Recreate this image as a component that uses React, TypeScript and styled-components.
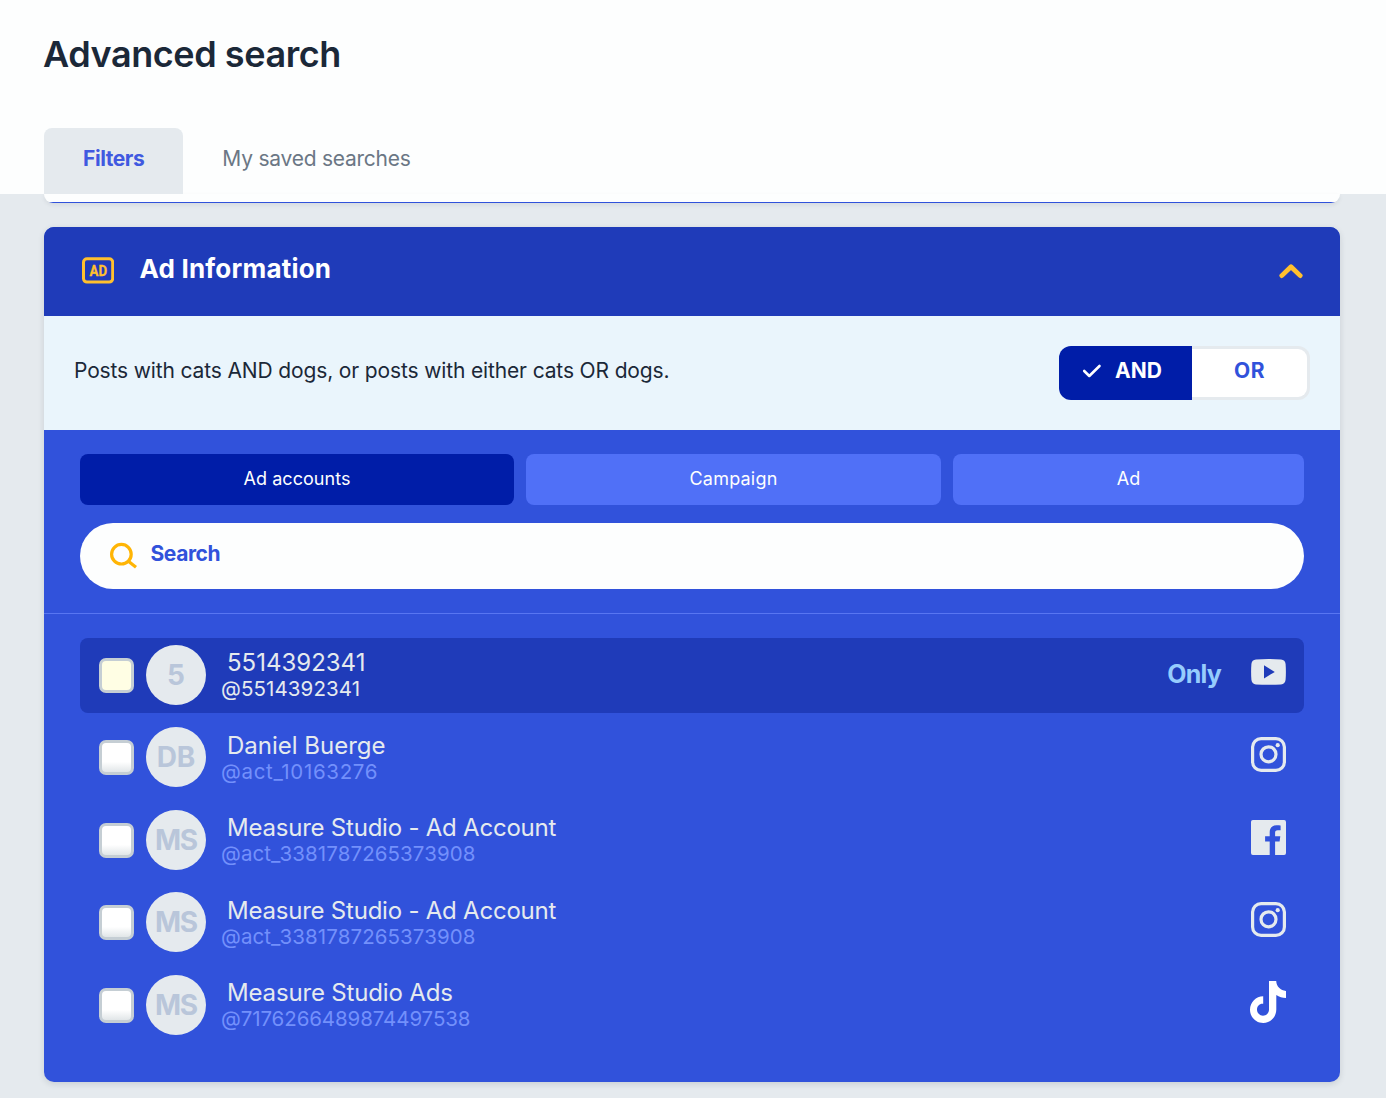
import React from "react";
import styled, { createGlobalStyle } from "styled-components";

const Global = createGlobalStyle`
  * { box-sizing: border-box; }
  html, body { margin: 0; padding: 0; }
  body {
    background: #e5eaee;
    font-family: Inter, "Liberation Sans", sans-serif;
    color: #1b2838;
    height: 1098px;
    overflow: hidden;
  }
  button { font-family: inherit; border: 0; padding: 0; margin: 0; cursor: pointer; }
`;

const Label = styled.span<{ $size: number; $weight?: number; $spacing?: number }>`
  display: block;
  font-size: ${(p) => p.$size}px;
  font-weight: ${(p) => p.$weight ?? 400};
  letter-spacing: ${(p) => p.$spacing ?? 0}px;
  line-height: 26px;
  white-space: nowrap;
`;

const TopBar = styled.header`
  height: 194px;
  padding: 0 44px;
  background: #fdfefe;
  display: flex;
  flex-direction: column;
  justify-content: space-between;
`;

const Title = styled.h1`
  margin: 0 0 0 -1px;
  padding-top: 30px;
  font-size: 36px;
  line-height: 48px;
  font-weight: 600;
  letter-spacing: -0.43px;
  white-space: nowrap;
`;

const PageTabs = styled.nav`
  display: flex;
`;

const PageTab = styled.button<{ $active?: boolean }>`
  height: 66px;
  padding: 0 39px 4px;
  border-radius: 8px 8px 0 0;
  background: ${(p) => (p.$active ? "#e5eaee" : "transparent")};
  color: ${(p) => (p.$active ? "#4059e0" : "#6b7785")};
`;

const Main = styled.main`
  padding: 0 46px 0 44px;
`;

const PreviousCard = styled.div`
  height: 9px;
  border-radius: 0 0 9px 9px;
  background: linear-gradient(#fdfefe 8px, #3152db 8px);
  box-shadow: 0 2px 4px rgba(27, 40, 56, 0.08);
`;

const Card = styled.section`
  margin-top: 24px;
  height: 855px;
  border-radius: 10px;
  overflow: hidden;
  background: #3152db;
  box-shadow: 0 2px 6px rgba(27, 40, 56, 0.14);
`;

const CardHeader = styled.div`
  height: 89px;
  padding: 0 37px 2px 38px;
  display: flex;
  align-items: center;
  background: #1f3bb9;
  color: #fff;
  svg { display: block; }
`;

const CardTitle = styled.div`
  flex: 1;
  padding: 0 0 3px 25.5px;
`;

const LogicBar = styled.div`
  height: 114px;
  padding: 0 30px;
  display: flex;
  align-items: center;
  justify-content: space-between;
  background: #eaf5fc;
`;

const Hint = styled.div`
  padding-bottom: 5px;
`;

const Toggle = styled.div`
  display: flex;
  width: 251px;
  height: 54px;
`;

const AndButton = styled.button`
  width: 133px;
  padding: 0 0 4px 23px;
  display: flex;
  align-items: center;
  gap: 13px;
  border-radius: 12px 0 0 12px;
  background: #001da8;
  color: #fff;
`;

const OrButton = styled.button`
  flex: 1;
  padding-bottom: 4px;
  border: 3px solid #e5eaee;
  border-left: 0;
  border-radius: 0 12px 12px 0;
  background: #fff;
  color: #3152db;
`;

const Controls = styled.div`
  padding: 24px 36px;
  border-bottom: 1px solid #5876f2;
`;

const Segments = styled.div`
  display: grid;
  grid-template-columns: 434fr 415fr 351fr;
  gap: 12px;
`;

const Segment = styled.button<{ $active?: boolean }>`
  height: 51px;
  padding-bottom: 2px;
  border-radius: 8px;
  background: ${(p) => (p.$active ? "#001da8" : "#5070f7")};
  color: #fdfefe;
`;

const SearchBox = styled.div`
  height: 66px;
  margin-top: 18px;
  padding: 0 29px;
  display: flex;
  align-items: center;
  gap: 11.5px;
  border-radius: 33px;
  background: #fdfefe;
  color: #3152db;
  ${Label} { padding-bottom: 4px; }
`;

const List = styled.div`
  padding: 24px 36px 0;
  display: flex;
  flex-direction: column;
  gap: 7.5px;
`;

const Row = styled.div<{ $active?: boolean }>`
  height: 75px;
  padding: 0 18px 0 19px;
  display: flex;
  align-items: center;
  border-radius: 8px;
  background: ${(p) => (p.$active ? "#1f3bb9" : "transparent")};
`;

const Checkbox = styled.span<{ $active?: boolean }>`
  width: 35px;
  height: 35px;
  margin-bottom: 1px;
  border: 3px solid #c5ced4;
  border-radius: 7px;
  background: ${(p) =>
    p.$active ? "#fffee4" : "linear-gradient(#fff 0%, #fff 65%, #e1e6e8 100%)"};
`;

const Avatar = styled.span`
  width: 60px;
  height: 60px;
  margin: 0 0 1.5px 12px;
  display: flex;
  align-items: center;
  justify-content: center;
  border-radius: 50%;
  background: #e5eaee;
  color: #b9c6da;
`;

const Names = styled.div`
  flex: 1;
  padding: 1px 0 0 15px;
`;

const Name = styled(Label)`
  padding-left: 6px;
  color: #e5eaee;
`;

const Handle = styled(Label)<{ $active?: boolean }>`
  color: ${(p) => (p.$active ? "#e5eaee" : "#7390fb")};
`;

const Only = styled.div`
  margin: 0 29px 3px 0;
  color: #96ccfd;
`;

const Network = styled.span<{ $bright?: boolean }>`
  width: 36px;
  padding-bottom: 7px;
  display: flex;
  justify-content: center;
  color: ${(p) => (p.$bright ? "#fff" : "#e5eaee")};
  svg { display: block; overflow: visible; }
`;

const AdIcon = () => (
  <svg width="32" height="27" viewBox="0 0 32 27">
    <rect x="1.500" y="1.700" width="29.200" height="23.400" rx="3.500" fill="none" stroke="#ffc02e" strokeWidth="3" />
    <text x="16.300" y="18.600" textAnchor="middle" fontFamily="Roboto, sans-serif" fontWeight="700" fontSize="15" textLength="17.500" lengthAdjust="spacingAndGlyphs" fill="#ffc02e" stroke="#ffc02e" strokeWidth="0.300">AD</text>
  </svg>
);

const Chevron = () => (
  <svg width="24" height="16" viewBox="0 0 24 16">
    <path d="M2.800 12.600 12 3.700l9.200 8.900" fill="none" stroke="#ffc02e" strokeWidth="4.800" strokeLinecap="round" strokeLinejoin="round" />
  </svg>
);

const Check = () => (
  <svg width="20" height="14" viewBox="0 0 20 14">
    <path d="m2.200 7 5.100 5L17.500 2" fill="none" stroke="#fff" strokeWidth="2.600" strokeLinecap="round" strokeLinejoin="round" />
  </svg>
);

const SearchIcon = () => (
  <svg width="30" height="28" viewBox="0 0 30 28">
    <circle cx="12.400" cy="12.200" r="9.800" fill="none" stroke="#ffb505" strokeWidth="3.200" />
    <path d="m19.400 19.200 7.600 6" stroke="#ffb505" strokeWidth="3.200" />
  </svg>
);

const YouTube = () => (
  <svg width="35" height="26" viewBox="0 0 35 26">
    <path fill="currentColor" fillRule="evenodd" d="M5 .5Q17.500-.5 30 .5Q34.200.8 34.600 5Q35.200 13 34.600 20.800Q34.200 25 30 25.400Q17.500 26 5 25.400Q.8 25 .4 20.800Q-.2 13 .4 5Q.8.8 5 .5ZM13 6.300V19.500L23.800 12.900Z" />
  </svg>
);

const Instagram = () => (
  <svg width="35" height="35" viewBox="0 0 35 35">
    <rect x="1.600" y="1.600" width="31.800" height="31.800" rx="8.500" fill="none" stroke="currentColor" strokeWidth="3.200" />
    <circle cx="17.500" cy="17.300" r="7.500" fill="none" stroke="currentColor" strokeWidth="3.200" />
    <circle cx="26.700" cy="8.200" r="2.100" fill="currentColor" />
  </svg>
);

const Facebook = () => (
  <svg width="35" height="35" viewBox="0 0 35 35">
    <path fill="currentColor" d="M1.900 0H33.100Q35 0 35 1.900V33.100Q35 35 33.100 35H24.100V21.500H28.600L29.300 16.200H24.100V12.800C24.100 11.200 24.600 10.200 26.800 10.200H29.600V5.500C29.100 5.400 27.400 5.300 25.500 5.300C21.400 5.300 18.700 7.700 18.700 12.200V16.200H14.100V21.500H18.700V35H1.900Q0 35 0 33.100V1.900Q0 0 1.900 0Z" />
  </svg>
);

const TikTok = () => (
  <svg width="36" height="42" viewBox="0 0 36 42">
    <path fill="currentColor" d="M19 0H26.200C26.400 5.400 30.500 9.600 36 9.900V17C32.500 17 29.100 15.900 26.300 14V28.500C26.300 36 20.500 42 13.200 42S0 36.100 0 28.700S6 15.300 13.200 15.300V22.800C9.700 22.300 7 25.200 7 28.600C7 32 9.700 34.700 13 34.700S19 32 19 28.500Z" />
  </svg>
);

const icons = { youtube: YouTube, instagram: Instagram, facebook: Facebook, tiktok: TikTok };

interface Account {
  initials: string;
  name: string;
  handle: string;
  network: keyof typeof icons;
  active?: boolean;
  nameSpacing: number;
  handleSpacing: number;
}

const accounts: Account[] = [
  { initials: "5", name: "5514392341", handle: "@5514392341", network: "youtube", active: true, nameSpacing: 0, handleSpacing: 0.1 },
  { initials: "DB", name: "Daniel Buerge", handle: "@act_10163276", network: "instagram", nameSpacing: 0, handleSpacing: 0.68 },
  { initials: "MS", name: "Measure Studio - Ad Account", handle: "@act_3381787265373908", network: "facebook", nameSpacing: -0.22, handleSpacing: 0.09 },
  { initials: "MS", name: "Measure Studio - Ad Account", handle: "@act_3381787265373908", network: "instagram", nameSpacing: -0.22, handleSpacing: 0.09 },
  { initials: "MS", name: "Measure Studio Ads", handle: "@7176266489874497538", network: "tiktok", nameSpacing: -0.16, handleSpacing: -0.1 },
];

function AccountRow({ account }: { account: Account }) {
  const Icon = icons[account.network];
  return (
    <Row $active={account.active}>
      <Checkbox role="checkbox" aria-checked={false} $active={account.active} />
      <Avatar>
        <Label $size={28} $weight={700} $spacing={account.initials === "MS" ? -1.2 : 0}>{account.initials}</Label>
      </Avatar>
      <Names>
        <Name $size={24} $spacing={account.nameSpacing}>{account.name}</Name>
        <Handle $size={20.5} $spacing={account.handleSpacing} $active={account.active}>{account.handle}</Handle>
      </Names>
      {account.active && (
        <Only>
          <Label $size={25} $weight={700} $spacing={-0.8}>Only</Label>
        </Only>
      )}
      <Network $bright={account.network === "tiktok"}>
        <Icon />
      </Network>
    </Row>
  );
}

export default function App() {
  return (
    <>
      <Global />
      <TopBar>
        <Title>Advanced search</Title>
        <PageTabs>
          <PageTab $active>
            <Label $size={21} $weight={700} $spacing={-0.43}>Filters</Label>
          </PageTab>
          <PageTab>
            <Label $size={21} $spacing={-0.24}>My saved searches</Label>
          </PageTab>
        </PageTabs>
      </TopBar>
      <Main>
        <PreviousCard />
        <Card>
          <CardHeader>
            <AdIcon />
            <CardTitle>
              <Label $size={26} $weight={700} $spacing={0.2}>Ad Information</Label>
            </CardTitle>
            <Chevron />
          </CardHeader>
          <LogicBar>
            <Hint>
              <Label $size={21} $spacing={-0.14}>Posts with cats AND dogs, or posts with either cats OR dogs.</Label>
            </Hint>
            <Toggle>
              <AndButton>
                <Check />
                <Label $size={21} $weight={700}>AND</Label>
              </AndButton>
              <OrButton>
                <Label $size={21} $weight={700} $spacing={0.4}>OR</Label>
              </OrButton>
            </Toggle>
          </LogicBar>
          <Controls>
            <Segments>
              <Segment $active><Label $size={18} $spacing={0.04}>Ad accounts</Label></Segment>
              <Segment><Label $size={18} $spacing={0.2}>Campaign</Label></Segment>
              <Segment><Label $size={18}>Ad</Label></Segment>
            </Segments>
            <SearchBox>
              <SearchIcon />
              <Label $size={21} $weight={700} $spacing={-0.4}>Search</Label>
            </SearchBox>
          </Controls>
          <List>
            {accounts.map((account, i) => (
              <AccountRow key={i} account={account} />
            ))}
          </List>
        </Card>
      </Main>
    </>
  );
}
